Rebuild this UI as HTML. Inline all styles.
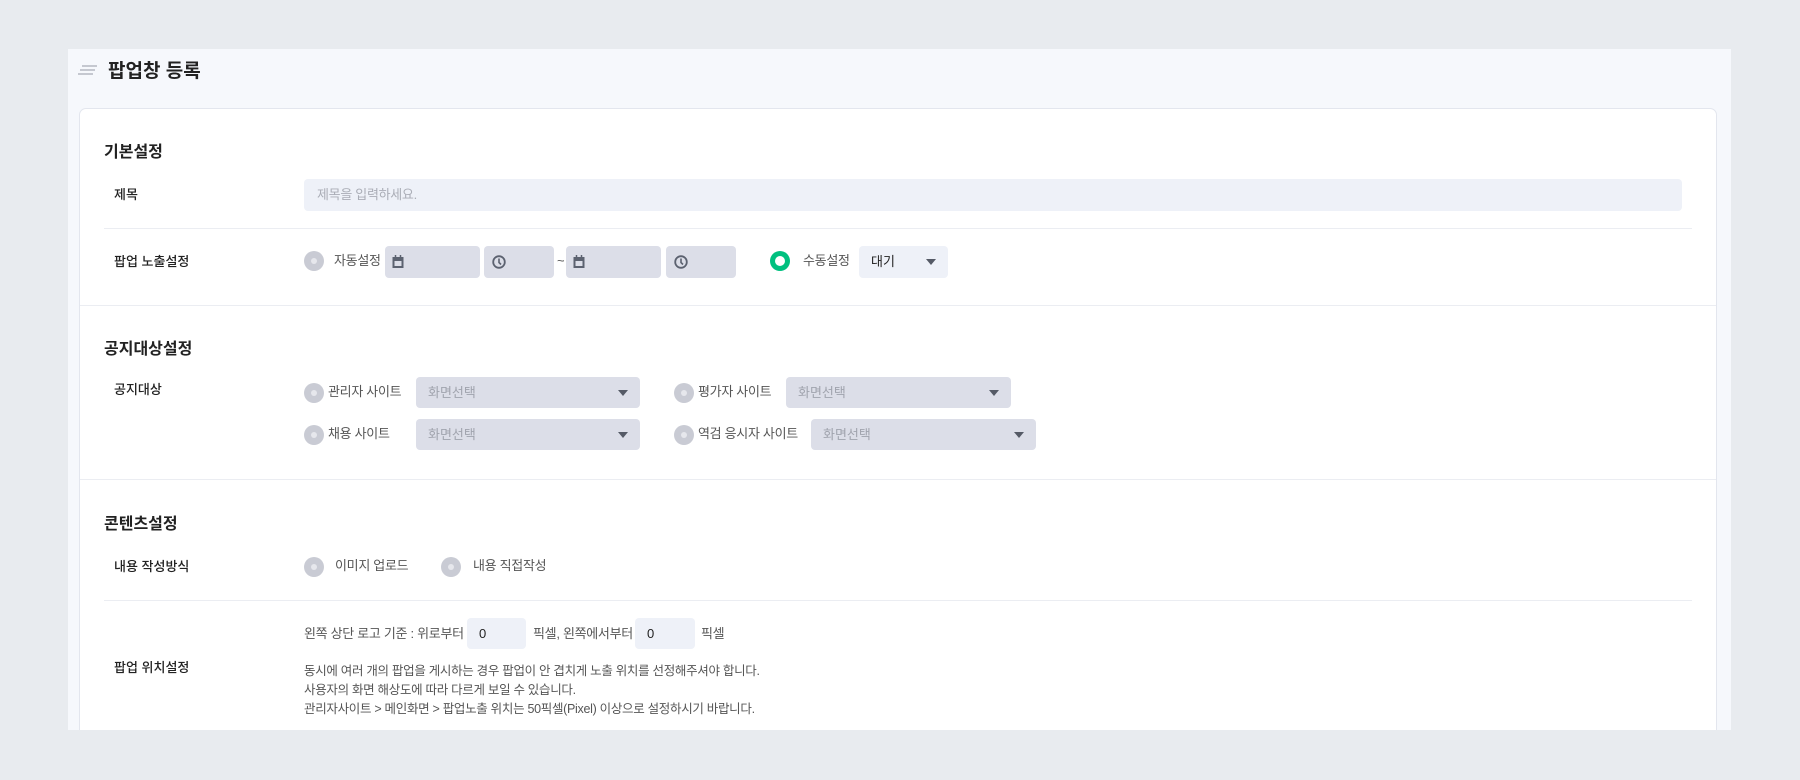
<!DOCTYPE html>
<html><head><meta charset="utf-8"><style>
*{margin:0;padding:0;box-sizing:border-box}
body{width:1800px;height:780px;background:#e8ebef;font-family:"Liberation Sans","Noto Sans CJK KR",sans-serif;position:relative;overflow:hidden;color:#333}
.a{position:absolute}
.panel{left:68px;top:49px;width:1663px;height:681px;background:#f6f8fc}
.card{left:79px;top:108px;width:1638px;height:640px;background:#fff;border:1px solid #e3e6ee;border-radius:7px}
.h{font-size:16px;font-weight:bold;color:#222;left:104px}
.lb{font-size:13px;font-weight:500;color:#222;left:114px;line-height:16px}
.t{font-size:13px;color:#555;line-height:16px;white-space:nowrap;letter-spacing:-0.3px}
.hr{height:1px;background:#ebedf2}
.radio{width:20px;height:20px;border-radius:50%;background:#c9cbd4}
.radio:after{content:"";position:absolute;left:7px;top:7px;width:6px;height:6px;border-radius:50%;background:#e6e7ec}
.on{background:#00c07f}
.on:after{left:5px;top:5px;width:10px;height:10px;background:#fff}
.box{background:#dcdee8;border-radius:4px;height:32px}
.sel{background:#dcdee8;border-radius:4px;height:31px;font-size:13px;color:#a0a3ad;padding:8px 12px;line-height:16px}
.sel:after{content:"";position:absolute;right:12px;top:13px;border-left:5px solid transparent;border-right:5px solid transparent;border-top:6px solid #555a66}
.inp{background:#eef1f8;border-radius:4px}
</style></head><body>
<div class="a panel"></div>
<svg class="a" style="left:78px;top:63px" width="19" height="14"><g stroke="#c5c8d0" stroke-width="2"><line x1="4" y1="3" x2="19" y2="3"/><line x1="2" y1="7" x2="17" y2="7"/><line x1="0" y1="11" x2="15" y2="11"/></g></svg>
<div class="a" style="left:108px;top:56px;font-size:19px;font-weight:bold;color:#222">팝업창 등록</div>
<div class="a card"></div>

<div class="a h" style="top:138px">기본설정</div>
<div class="a lb" style="top:187px">제목</div>
<div class="a inp" style="left:304px;top:179px;width:1378px;height:32px"></div>
<div class="a t" style="left:317px;top:187px;color:#aaadb6">제목을 입력하세요.</div>
<div class="a hr" style="left:104px;top:228px;width:1588px"></div>

<div class="a lb" style="top:254px">팝업 노출설정</div>
<div class="a radio" style="left:304px;top:251px"></div>
<div class="a t" style="left:334px;top:253px">자동설정</div>
<div class="a box" style="left:385px;top:246px;width:95px"></div>
<div class="a box" style="left:484px;top:246px;width:70px"></div>
<div class="a t" style="left:557px;top:253px">~</div>
<div class="a box" style="left:566px;top:246px;width:95px"></div>
<div class="a box" style="left:666px;top:246px;width:70px"></div>
<svg class="a" style="left:392px;top:255px" width="12" height="13"><rect x="1.5" y="3" width="9" height="9" fill="none" stroke="#5c6270" stroke-width="2"/><rect x="1" y="3" width="10" height="3" fill="#5c6270"/><line x1="3.5" y1="0" x2="3.5" y2="3" stroke="#5c6270" stroke-width="1.5"/><line x1="8.5" y1="0" x2="8.5" y2="3" stroke="#5c6270" stroke-width="1.5"/></svg>
<svg class="a" style="left:573px;top:255px" width="12" height="13"><rect x="1.5" y="3" width="9" height="9" fill="none" stroke="#5c6270" stroke-width="2"/><rect x="1" y="3" width="10" height="3" fill="#5c6270"/><line x1="3.5" y1="0" x2="3.5" y2="3" stroke="#5c6270" stroke-width="1.5"/><line x1="8.5" y1="0" x2="8.5" y2="3" stroke="#5c6270" stroke-width="1.5"/></svg>
<svg class="a" style="left:492px;top:255px" width="14" height="14"><circle cx="7" cy="7" r="5.8" fill="none" stroke="#5c6270" stroke-width="1.8"/><path d="M7 3.5V7.5L9 9.5" fill="none" stroke="#5c6270" stroke-width="1.6"/></svg>
<svg class="a" style="left:674px;top:255px" width="14" height="14"><circle cx="7" cy="7" r="5.8" fill="none" stroke="#5c6270" stroke-width="1.8"/><path d="M7 3.5V7.5L9 9.5" fill="none" stroke="#5c6270" stroke-width="1.6"/></svg>
<div class="a radio on" style="left:770px;top:251px"></div>
<div class="a t" style="left:803px;top:253px">수동설정</div>
<div class="a sel" style="left:859px;top:246px;width:89px;height:32px;background:#eef1f8;color:#222">대기</div>
<div class="a hr" style="left:80px;top:305px;width:1636px"></div>

<div class="a h" style="top:335px">공지대상설정</div>
<div class="a lb" style="top:382px">공지대상</div>
<div class="a radio" style="left:304px;top:383px"></div>
<div class="a t" style="left:328px;top:384px">관리자 사이트</div>
<div class="a sel" style="left:416px;top:377px;width:224px">화면선택</div>
<div class="a radio" style="left:674px;top:383px"></div>
<div class="a t" style="left:698px;top:384px">평가자 사이트</div>
<div class="a sel" style="left:786px;top:377px;width:225px">화면선택</div>
<div class="a radio" style="left:304px;top:425px"></div>
<div class="a t" style="left:328px;top:426px">채용 사이트</div>
<div class="a sel" style="left:416px;top:419px;width:224px">화면선택</div>
<div class="a radio" style="left:674px;top:425px"></div>
<div class="a t" style="left:698px;top:426px">역검 응시자 사이트</div>
<div class="a sel" style="left:811px;top:419px;width:225px">화면선택</div>
<div class="a hr" style="left:80px;top:479px;width:1636px"></div>

<div class="a h" style="top:510px">콘텐츠설정</div>
<div class="a lb" style="top:559px">내용 작성방식</div>
<div class="a radio" style="left:304px;top:557px"></div>
<div class="a t" style="left:335px;top:558px">이미지 업로드</div>
<div class="a radio" style="left:441px;top:557px"></div>
<div class="a t" style="left:473px;top:558px">내용 직접작성</div>
<div class="a hr" style="left:104px;top:600px;width:1588px"></div>

<div class="a t" style="left:304px;top:626px">왼쪽 상단 로고 기준 : 위로부터</div>
<div class="a inp" style="left:467px;top:618px;width:59px;height:31px"></div>
<div class="a t" style="left:479px;top:626px;color:#222">0</div>
<div class="a t" style="left:533px;top:626px">픽셀, 왼쪽에서부터</div>
<div class="a inp" style="left:635px;top:618px;width:60px;height:31px"></div>
<div class="a t" style="left:647px;top:626px;color:#222">0</div>
<div class="a t" style="left:701px;top:626px">픽셀</div>
<div class="a lb" style="top:660px">팝업 위치설정</div>
<div class="a t" style="left:304px;top:663px;font-size:12.5px">동시에 여러 개의 팝업을 게시하는 경우 팝업이 안 겹치게 노출 위치를 선정해주셔야 합니다.</div>
<div class="a t" style="left:304px;top:682px;font-size:12.5px">사용자의 화면 해상도에 따라 다르게 보일 수 있습니다.</div>
<div class="a t" style="left:304px;top:701px;font-size:12.5px">관리자사이트 &gt; 메인화면 &gt; 팝업노출 위치는 50픽셀(Pixel) 이상으로 설정하시기 바랍니다.</div>
<div class="a" style="left:0;top:730px;width:1800px;height:50px;background:#e8ebef"></div>
</body></html>
